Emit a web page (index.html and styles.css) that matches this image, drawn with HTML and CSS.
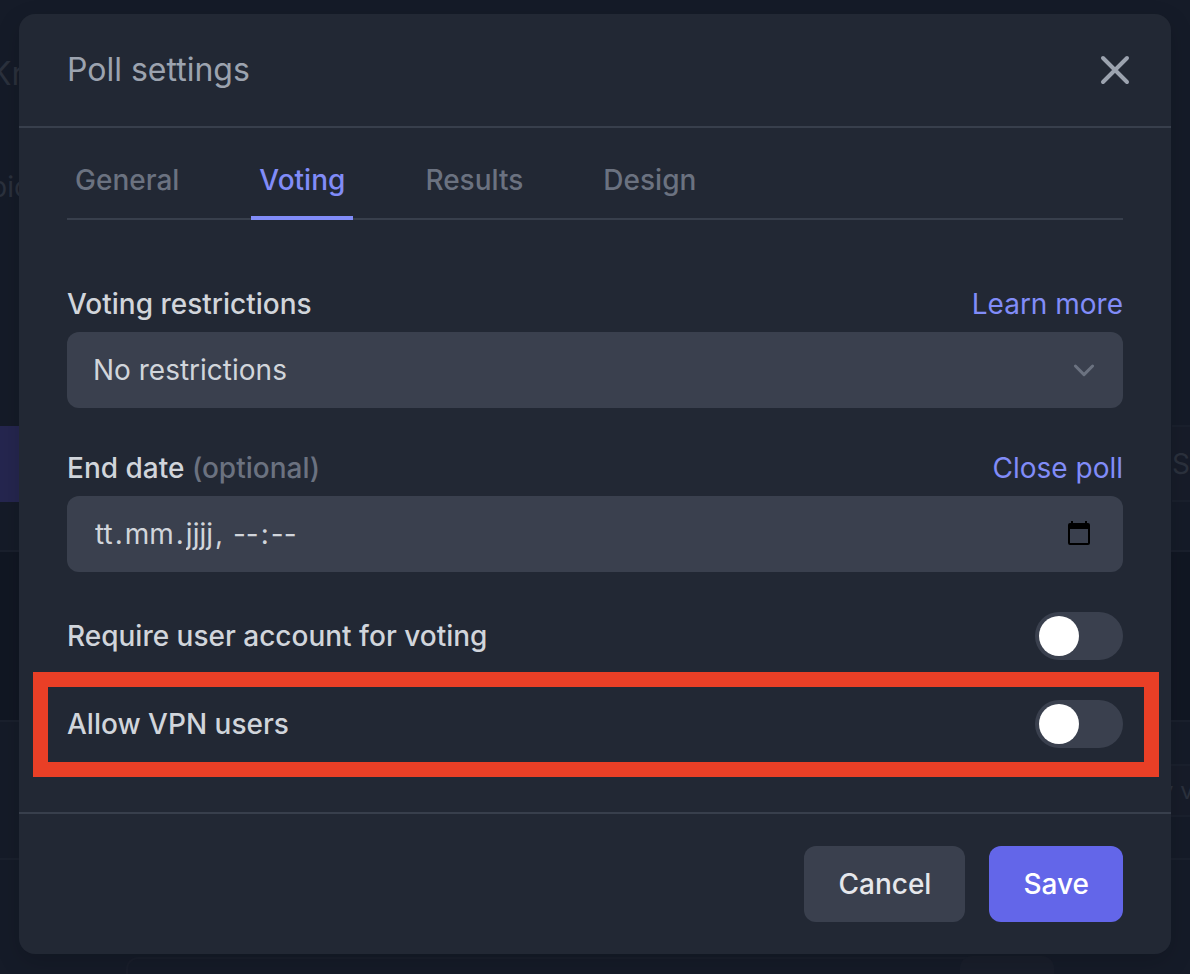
FILE: index.html
```html
<!DOCTYPE html>
<html lang="en">
<head>
<meta charset="utf-8">
<title>Poll settings</title>
<link rel="stylesheet" href="styles.css">
</head>
<body>
<div class="backdrop" aria-hidden="true">
  <div class="band band-dark"></div>
  <div class="band band-light"></div>
  <span class="ghost ghost-name">Kr</span>
  <span class="ghost ghost-topic">pic</span>
  <div class="ghost-primary"></div>
  <div class="ghost-box ghost-share">S</div>
  <div class="ghost-box ghost-view">y v</div>
  <div class="ghost-card"></div>
  <div class="ghost-chip"></div>
</div>
<main class="dialog" role="dialog" aria-labelledby="title">
  <header class="header">
    <h1 class="title" id="title">Poll settings</h1>
    <button class="close" type="button" aria-label="Close">
      <svg width="48" height="48" viewBox="0 0 48 48" fill="none" stroke="currentColor" stroke-width="4" stroke-linecap="round"><path d="M12 12L36 36M36 12L12 36"/></svg>
    </button>
  </header>
  <form class="body" id="settings">
    <nav class="tabs">
      <a class="tab" href="#general">General</a>
      <a class="tab tab-active" href="#voting" aria-current="page">Voting</a>
      <a class="tab" href="#results">Results</a>
      <a class="tab" href="#design">Design</a>
    </nav>
    <div class="fields">
      <div class="field">
        <div class="field-head">
          <label for="restrictions">Voting restrictions</label>
          <a class="link" href="#learn">Learn more</a>
        </div>
        <div class="control">
          <select class="input" id="restrictions"><option>No restrictions</option></select>
          <svg class="chevron" width="40" height="40" viewBox="0 0 20 20" fill="none" stroke="currentColor" stroke-width="1.5" stroke-linecap="round" stroke-linejoin="round"><path d="M5.700 8l4.300 4.300L14.300 8"/></svg>
        </div>
      </div>
      <div class="field">
        <div class="field-head">
          <label for="end">End date <span class="optional">(optional)</span></label>
          <a class="link" href="#close">Close poll</a>
        </div>
        <div class="control">
          <div class="input date" role="group" aria-label="End date"><input class="part" id="end" type="text" value="tt" aria-label="End date, day">.<input class="part" type="text" value="mm" aria-label="Month">.<input class="part" type="text" value="jjjj" aria-label="Year">, <input class="part" type="text" value="--" aria-label="Hours">:<input class="part" type="text" value="--" aria-label="Minutes"></div>
          <button class="calendar" type="button" aria-label="Pick a date">
            <svg width="24" height="26" viewBox="0 0 24 26"><path fill="currentColor" fill-rule="evenodd" d="M4 1h2v2h12V1h2v2h1q2 0 2 2v18q0 2-2 2H3q-2 0-2-2V5q0-2 2-2h1zM3 9v14h18V9z"/></svg>
          </button>
        </div>
      </div>
      <div class="row">
        <label for="account">Require user account for voting</label>
        <input class="switch" id="account" type="checkbox" role="switch">
      </div>
      <div class="row row-marked">
        <label for="vpn">Allow VPN users</label>
        <input class="switch" id="vpn" type="checkbox" role="switch">
      </div>
    </div>
  </form>
  <footer class="footer">
    <button class="button" type="button">Cancel</button>
    <button class="button button-primary" type="submit" form="settings">Save</button>
  </footer>
</main>
</body>
</html>
```
FILE: styles.css
```css
* { box-sizing: border-box; }
body {
  margin: 0;
  padding: 14px 19px 20px;
  background: #151b28;
  color: #d1d5db;
  font: 400 28px/40px Inter, "Liberation Sans", sans-serif;
}
button, input, select { font: inherit; color: inherit; border: 0; margin: 0; }
a { text-decoration: none; }

/* Dimmed page behind the dialog */
.backdrop { position: absolute; inset: 0; overflow: hidden; color: #2b313d; }
.band { position: absolute; left: 0; right: 0; border: solid #1a202d; border-width: 2px 0 0; }
.band-dark { top: 550px; height: 170px; background: #111723; }
.band-light { top: 720px; height: 140px; border-width: 2px 0; }
.ghost { position: absolute; }
.ghost-name { left: -10px; top: 54px; font-size: 32px; }
.ghost-topic { left: -10px; top: 167px; }
.ghost-primary { position: absolute; left: 0; top: 426px; width: 40px; height: 76px; background: #25264f; }
.ghost-box { position: absolute; right: 0; border: solid #1a202d; border-width: 2px 0; background: #171c29; }
.ghost-share { top: 425px; height: 77px; width: 18px; line-height: 74px; }
.ghost-view { top: 764px; height: 53px; width: 30px; line-height: 49px; font-size: 24px; white-space: nowrap; }
.ghost-card { position: absolute; left: 126px; right: 136px; bottom: 0; height: 17px; border: 2px solid #191e2b; border-bottom: 0; border-radius: 12px 12px 0 0; }
.ghost-chip { position: absolute; right: 136px; bottom: 0; width: 94px; height: 18px; border-radius: 12px 12px 0 0; background: #191e2b; }

.dialog {
  position: relative;
  background: #222834;
  border-radius: 16px;
  box-shadow: 0 8px 24px rgba(0, 0, 0, 0.15);
}
.header {
  display: flex;
  align-items: center;
  justify-content: space-between;
  padding: 32px 32px 32px 48px;
  border-bottom: 2px solid #383f4c;
  color: #9ca3af;
}
.title { margin: 0; font-size: 32px; font-weight: 400; line-height: 48px; }
.close { display: flex; padding: 0; background: none; }

.body { padding: 0 48px 64px; }
.tabs { display: flex; gap: 64px; box-shadow: inset 0 -2px #383f4c; }
.tab {
  padding: 32px 8px 16px;
  border-bottom: 4px solid transparent;
  color: #6b7280;
  font-weight: 500;
}
.tab-active { color: #818cf8; border-color: #818cf8; }
.fields { display: grid; gap: 40px; padding-top: 64px; font-weight: 500; }
.field { display: grid; gap: 8px; }
.field-head, .row { display: flex; align-items: center; justify-content: space-between; }
.link { color: #818cf8; font-weight: 400; }
.optional { color: #6b7280; }
.control { position: relative; font-weight: 400; }
.input {
  display: block;
  width: 100%;
  height: 76px;
  padding: 0 80px 0 26px;
  border-radius: 12px;
  background: #3a404e;
  appearance: none;
}
.date { line-height: 76px; white-space: pre; }
.part { field-sizing: content; padding: 0 2px; background: none; line-height: 40px; }
.chevron { position: absolute; right: 19px; top: 18px; color: #6b7280; pointer-events: none; }
.calendar { position: absolute; right: 32px; top: 24px; display: flex; padding: 0; background: none; color: #000; }
.row { position: relative; height: 48px; }
.row-marked::after {
  content: "";
  position: absolute;
  inset: -28px -36px -29px -34px;
  border: 15px solid #e93f26;
  pointer-events: none;
}
.switch {
  appearance: none;
  width: 88px;
  height: 48px;
  padding: 4px;
  border-radius: 24px;
  background: #3a404e;
}
.switch::before {
  content: "";
  display: block;
  width: 40px;
  height: 40px;
  border-radius: 50%;
  background: #fff;
}
.switch:checked::before { margin-left: auto; }

.footer {
  display: flex;
  justify-content: flex-end;
  gap: 24px;
  padding: 32px 48px;
  border-top: 2px solid #383f4c;
}
.button {
  padding: 18px 34px;
  border-radius: 12px;
  background: #3a404e;
  color: #e5e7eb;
  font-weight: 500;
}
.button-primary { background: #6366e9; color: #fff; }
```
